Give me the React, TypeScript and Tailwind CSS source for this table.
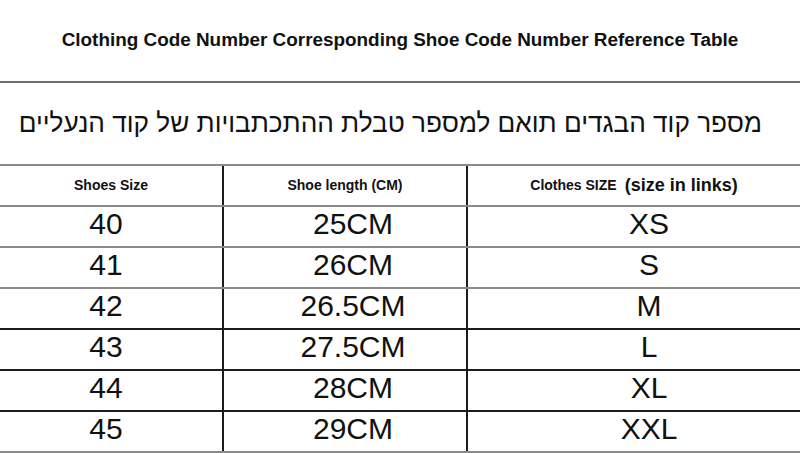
const rows = [
  { size: "40", length: "25CM", cloth: "XS", line: "border-[#8a8a8a]" },
  { size: "41", length: "26CM", cloth: "S", line: "border-[#8a8a8a]" },
  { size: "42", length: "26.5CM", cloth: "M", line: "border-[#8a8a8a]" },
  { size: "43", length: "27.5CM", cloth: "L", line: "border-[#1c1c1c]" },
  { size: "44", length: "28CM", cloth: "XL", line: "border-[#1c1c1c]" },
  { size: "45", length: "29CM", cloth: "XXL", line: "border-[#1c1c1c]" },
];

export default function App() {
  return (
    <div className="h-[453px] w-[800px] overflow-hidden bg-white font-['Liberation_Sans',Arial,sans-serif] text-[#111]">
      <div className="flex h-[81px] items-center justify-center">
        <h1 className="text-[18.9px] font-bold">
          Clothing Code Number Corresponding Shoe Code Number Reference Table
        </h1>
      </div>
      <div className="h-[2px] bg-[#6e6e6e]" />
      <div className="flex h-[81px] items-center justify-start pr-[38px]" dir="rtl">
        <p className="whitespace-nowrap text-[26.2px]">
          מספר קוד הבגדים תואם למספר טבלת ההתכתבויות של קוד הנעליים
        </p>
      </div>

      <div className="grid h-[41px] grid-cols-[222px_244px_1fr] border-t-2 border-[#8a8a8a] font-bold">
        <div className="flex items-center justify-center text-[14px]">Shoes Size</div>
        <div className="flex items-center justify-center border-l-2 border-[#1c1c1c] text-[14px]">
          Shoe length (CM)
        </div>
        <div className="flex items-center justify-center gap-[8px] border-l-2 border-[#1c1c1c]">
          <span className="text-[14px]">Clothes SIZE</span>
          <span className="text-[18px]">(size in links)</span>
        </div>
      </div>

      {rows.map((r) => (
        <div
          key={r.size}
          className={`grid h-[41px] grid-cols-[222px_244px_1fr] border-t-2 ${r.line} text-[30px] leading-none`}
        >
          <div className="flex items-center justify-center pr-[10px]">
            <span className="-translate-y-[3px]">{r.size}</span>
          </div>
          <div className="flex items-center justify-center border-l-2 border-[#1c1c1c] pl-[16px]">
            <span className="-translate-y-[3px]">{r.length}</span>
          </div>
          <div className="flex items-center justify-center border-l-2 border-[#1c1c1c] pl-[30px]">
            <span className="-translate-y-[3px]">{r.cloth}</span>
          </div>
        </div>
      ))}
      <div className="h-[2px] border-t-2 border-[#8a8a8a]" />
    </div>
  );
}
